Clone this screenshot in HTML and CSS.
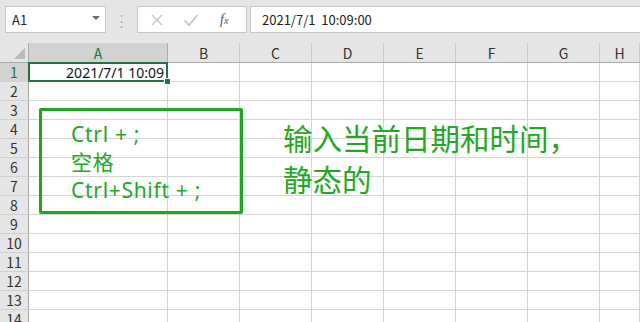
FILE: index.html
```html
<!DOCTYPE html>
<html lang="zh-CN">
<head>
    <meta charset="UTF-8">
    <meta name="viewport" content="width=device-width, initial-scale=1.0">
    <title>Excel - 当前日期和时间</title>
    <link rel="stylesheet" href="styles.css">
</head>
<body>
    <!-- barra della formula -->
    <div class="toolbar">
        <div class="name-box">
            <span>A1</span>
            <span class="drop"></span>
        </div>
        <div class="dots">⋮</div>
        <div class="fx-box">
            <svg class="ico" width="14" height="14" viewBox="0 0 14 14">
                <path d="M2 2 L12 12 M12 2 L2 12" stroke="#c4c4c4" stroke-width="1.4" fill="none"/>
            </svg>
            <svg class="ico" width="16" height="14" viewBox="0 0 16 14">
                <path d="M1.5 7.5 L6 12 L14.5 2" stroke="#c4c4c4" stroke-width="1.6" fill="none"/>
            </svg>
            <span class="fx"><i>f</i><i class="x">x</i></span>
        </div>
        <div class="formula">2021/7/1&nbsp; 10:09:00</div>
    </div>

    <div class="sheet">
        <div class="grid">
            <div class="corner"><span class="tri"></span></div>
            <div class="col-head active">A</div>
            <div class="col-head">B</div>
            <div class="col-head">C</div>
            <div class="col-head">D</div>
            <div class="col-head">E</div>
            <div class="col-head">F</div>
            <div class="col-head">G</div>
            <div class="col-head">H</div>
        </div>
        <div class="rows" id="rows"></div>

        <!-- riquadro con le scorciatoie -->
        <div class="note-box">
            <div>Ctrl + ;</div>
            <div>空格</div>
            <div>Ctrl+Shift + ;</div>
        </div>
        <div class="note-text">输入当前日期和时间，<br>静态的</div>
    </div>

    <script>
        // genera le righe della griglia
        const rows = document.getElementById('rows');
        for (let i = 1; i <= 14; i++) {
            const row = document.createElement('div');
            row.className = 'grid';
            let html = '<div class="row-head' + (i === 1 ? ' active' : '') + '">' + i + '</div>';
            for (let c = 0; c < 8; c++) {
                if (i === 1 && c === 0) {
                    html += '<div class="cell selected">2021/7/1 10:09<span class="handle"></span></div>';
                } else {
                    html += '<div class="cell"></div>';
                }
            }
            row.innerHTML = html;
            rows.appendChild(row);
        }
    </script>
</body>
</html>
```

FILE: styles.css
```css
body {
    margin: 0;
    width: 640px;
    height: 322px;
    overflow: hidden;
    background: #ffffff;
    font-family: "Noto Sans CJK SC", "Noto Sans", sans-serif;
}

/* barra in alto */
.toolbar {
    height: 43px;
    background: #e6e6e6;
    display: flex;
    align-items: flex-start;
    padding-top: 6px;
    box-sizing: border-box;
}
.name-box {
    margin-left: 5px;
    width: 101px;
    height: 27px;
    box-sizing: border-box;
    background: #fff;
    border: 1px solid #c6c6c6;
    display: flex;
    align-items: center;
    justify-content: space-between;
    padding: 0 5px 0 6px;
    font-size: 13px;
    color: #222;
}
.drop {
    width: 0;
    height: 0;
    border-left: 4px solid transparent;
    border-right: 4px solid transparent;
    border-top: 4px solid #6d6d6d;
    margin-top: -3px;
}
.dots {
    width: 31px;
    text-align: center;
    color: #b0b0b0;
    font-size: 15px;
    line-height: 27px;
}
.fx-box {
    width: 110px;
    height: 27px;
    box-sizing: border-box;
    background: #fff;
    border: 1px solid #c6c6c6;
    display: flex;
    align-items: center;
    padding-left: 12px;
    gap: 19px;
}
.fx {
    font-family: "Liberation Serif", serif;
    font-size: 14px;
    color: #555;
    margin-left: 2px;
}
.fx .x {
    font-size: 10px;
}
.formula {
    flex: 1;
    margin-left: 3px;
    height: 27px;
    box-sizing: border-box;
    background: #fff;
    border: 1px solid #c6c6c6;
    border-right: none;
    font-size: 13px;
    line-height: 25px;
    padding-left: 11px;
    color: #222;
}

/* foglio */
.sheet {
    position: relative;
}
.grid {
    display: grid;
    grid-template-columns: 29px 139px 72px 72px 72px 72px 72px 72px 40px;
}
.corner,
.col-head {
    height: 19px;
    background: #e6e6e6;
    border-bottom: 1px solid #ababab;
}
.corner {
    border-right: 1px solid #ababab;
    position: relative;
}
.tri {
    position: absolute;
    right: 3px;
    bottom: 3px;
    width: 0;
    height: 0;
    border-left: 11px solid transparent;
    border-bottom: 11px solid #b9b9b9;
}
.col-head {
    border-right: 1px solid #c8c8c8;
    text-align: center;
    font-size: 14px;
    line-height: 20px;
    color: #333;
}
.col-head.active {
    background: #d2d2d2;
    color: #217346;
    border-right-color: #ababab;
}
.row-head {
    height: 18px;
    background: #e6e6e6;
    border-right: 1px solid #ababab;
    border-bottom: 1px solid #d0d0d0;
    text-align: center;
    font-size: 14px;
    line-height: 19px;
    color: #333;
}
.row-head.active {
    background: #d2d2d2;
    color: #217346;
}
.cell {
    height: 18px;
    border-right: 1px solid #d4d4d4;
    border-bottom: 1px solid #d4d4d4;
    font-family: "Noto Sans", sans-serif;
    font-size: 14px;
    line-height: 19px;
    text-align: right;
    color: #111;
}
.cell.selected {
    position: relative;
    padding-right: 3px;
}
.cell.selected::after {
    content: "";
    position: absolute;
    left: -1px;
    top: -1px;
    right: -1px;
    bottom: -1px;
    border: 2px solid #217346;
}
.handle {
    position: absolute;
    right: -4px;
    bottom: -4px;
    width: 5px;
    height: 5px;
    background: #217346;
    border: 1px solid #fff;
    z-index: 2;
}

/* annotazioni */
.note-box {
    position: absolute;
    left: 39px;
    top: 65px;
    width: 204px;
    height: 106px;
    box-sizing: border-box;
    border: 3px solid #1fa81f;
    border-radius: 2px;
    padding: 9px 0 0 29px;
    font-family: "Noto Sans", "Noto Sans CJK SC", sans-serif;
    font-size: 21px;
    line-height: 28px;
    letter-spacing: 0.7px;
    color: #22a822;
}
.note-text {
    position: absolute;
    left: 283px;
    top: 74px;
    font-size: 29.5px;
    line-height: 41px;
    color: #22a822;
}
```
